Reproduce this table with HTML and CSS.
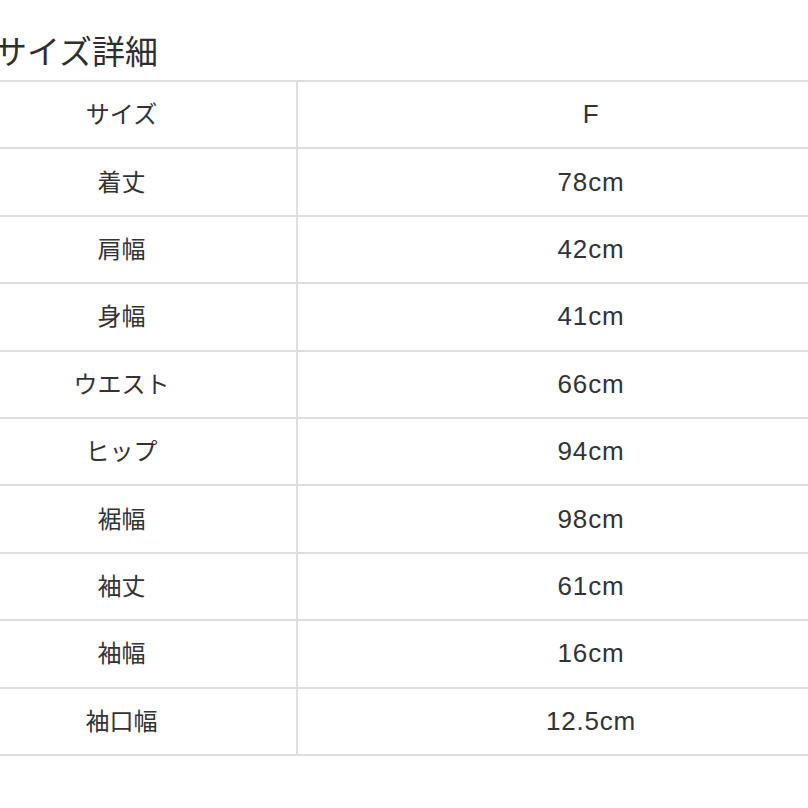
FILE: index.html
```html
<!DOCTYPE html>
<html lang="ja">
<head>
<meta charset="utf-8">
<link rel="stylesheet" href="styles.css">
</head>
<body>
<div class="wrap">
  <h2 class="title">サイズ詳細</h2>
  <table class="size-table">
    <tbody>
      <tr><td class="label">サイズ</td><td class="value">F</td></tr>
      <tr><td class="label">着丈</td><td class="value">78cm</td></tr>
      <tr><td class="label">肩幅</td><td class="value">42cm</td></tr>
      <tr><td class="label">身幅</td><td class="value">41cm</td></tr>
      <tr><td class="label">ウエスト</td><td class="value">66cm</td></tr>
      <tr><td class="label">ヒップ</td><td class="value">94cm</td></tr>
      <tr><td class="label">裾幅</td><td class="value">98cm</td></tr>
      <tr><td class="label">袖丈</td><td class="value">61cm</td></tr>
      <tr><td class="label">袖幅</td><td class="value">16cm</td></tr>
      <tr><td class="label">袖口幅</td><td class="value">12.5cm</td></tr>
    </tbody>
  </table>
</div>
</body>
</html>
```

FILE: styles.css
```css
html, body {
  margin: 0;
  padding: 0;
  background: #ffffff;
  overflow: hidden;
}
body {
  font-family: "Noto Sans CJK JP", "Noto Sans", sans-serif;
  color: #333333;
}
.wrap {
  margin-left: -55px;
  width: 941px;
}
.title {
  margin: 0;
  padding: 28px 0 0 49px;
  height: 52px;
  font-size: 33px;
  font-weight: 400;
  line-height: 44px;
  color: #2e2e2e;
}
.size-table {
  width: 941px;
  border-collapse: collapse;
  table-layout: fixed;
}
.size-table td {
  height: 62.4px;
  padding: 0 0 3px 0;
  border: 2px solid #dedede;
  text-align: center;
  font-size: 24px;
  line-height: 30px;
  color: #333333;
}
.size-table .label {
  width: 349px;
}
.size-table .value {
  font-family: "Liberation Sans", "Noto Sans CJK JP", sans-serif;
  font-size: 26px;
  letter-spacing: 0.8px;
  padding-bottom: 1px;
}
```
